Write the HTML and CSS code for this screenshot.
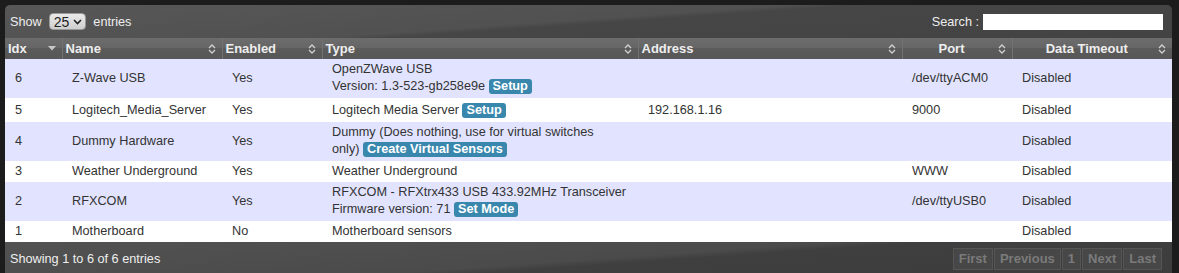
FILE: index.html
```html
<!DOCTYPE html>
<html lang="en">
<head>
  <meta charset="UTF-8">
  <title>Hardware</title>
  <link rel="stylesheet" href="styles.css">
</head>
<body>
  <div class="wrapper">
    <div class="toolbar">
      <div class="length">
        Show
        <span class="select">25
          <svg width="9" height="6" viewBox="0 0 9 6"><path d="M1 1 L4.5 4.5 L8 1" fill="none" stroke="#222" stroke-width="1.6"/></svg>
        </span>
        entries
      </div>
      <div class="filter">Search : <span class="search-box"></span></div>
    </div>

    <table class="grid">
      <colgroup>
        <col style="width:57px"><col style="width:160px"><col style="width:100px"><col style="width:316px">
        <col style="width:264px"><col style="width:110px"><col style="width:160px">
      </colgroup>
      <thead>
        <tr>
          <th><div class="th-in"><span>Idx</span><svg class="sort" width="8" height="5" viewBox="0 0 8 5"><path d="M0 0 H8 L4 4.5 Z" fill="#c8c8c8"/></svg></div></th>
          <th><div class="th-in"><span>Name</span><svg class="sort" width="8" height="10" viewBox="0 0 8 10"><path d="M1 4 L4 1 L7 4 M1 6 L4 9 L7 6" fill="none" stroke="#d0d0d0" stroke-width="1.3"/></svg></div></th>
          <th><div class="th-in"><span>Enabled</span><svg class="sort" width="8" height="10" viewBox="0 0 8 10"><path d="M1 4 L4 1 L7 4 M1 6 L4 9 L7 6" fill="none" stroke="#d0d0d0" stroke-width="1.3"/></svg></div></th>
          <th><div class="th-in"><span>Type</span><svg class="sort" width="8" height="10" viewBox="0 0 8 10"><path d="M1 4 L4 1 L7 4 M1 6 L4 9 L7 6" fill="none" stroke="#d0d0d0" stroke-width="1.3"/></svg></div></th>
          <th><div class="th-in"><span>Address</span><svg class="sort" width="8" height="10" viewBox="0 0 8 10"><path d="M1 4 L4 1 L7 4 M1 6 L4 9 L7 6" fill="none" stroke="#d0d0d0" stroke-width="1.3"/></svg></div></th>
          <th><div class="th-in center"><span>Port</span><svg class="sort" width="8" height="10" viewBox="0 0 8 10"><path d="M1 4 L4 1 L7 4 M1 6 L4 9 L7 6" fill="none" stroke="#d0d0d0" stroke-width="1.3"/></svg></div></th>
          <th><div class="th-in center"><span>Data Timeout</span><svg class="sort" width="8" height="10" viewBox="0 0 8 10"><path d="M1 4 L4 1 L7 4 M1 6 L4 9 L7 6" fill="none" stroke="#d0d0d0" stroke-width="1.3"/></svg></div></th>
        </tr>
      </thead>
      <tbody>
        <tr class="odd">
          <td>6</td><td>Z-Wave USB</td><td>Yes</td>
          <td>OpenZWave USB<br>Version: 1.3-523-gb258e9e <span class="btn">Setup</span></td>
          <td></td><td>/dev/ttyACM0</td><td>Disabled</td>
        </tr>
        <tr class="even">
          <td>5</td><td>Logitech_Media_Server</td><td>Yes</td>
          <td>Logitech Media Server <span class="btn">Setup</span></td>
          <td>192.168.1.16</td><td>9000</td><td>Disabled</td>
        </tr>
        <tr class="odd">
          <td>4</td><td>Dummy Hardware</td><td>Yes</td>
          <td>Dummy (Does nothing, use for virtual switches<br>only) <span class="btn">Create Virtual Sensors</span></td>
          <td></td><td></td><td>Disabled</td>
        </tr>
        <tr class="even">
          <td>3</td><td>Weather Underground</td><td>Yes</td>
          <td>Weather Underground</td>
          <td></td><td>WWW</td><td>Disabled</td>
        </tr>
        <tr class="odd">
          <td>2</td><td>RFXCOM</td><td>Yes</td>
          <td>RFXCOM - RFXtrx433 USB 433.92MHz Transceiver<br>Firmware version: 71 <span class="btn">Set Mode</span></td>
          <td></td><td>/dev/ttyUSB0</td><td>Disabled</td>
        </tr>
        <tr class="even">
          <td>1</td><td>Motherboard</td><td>No</td>
          <td>Motherboard sensors</td>
          <td></td><td></td><td>Disabled</td>
        </tr>
      </tbody>
    </table>

    <div class="footer">
      <div class="info">Showing 1 to 6 of 6 entries</div>
      <div class="paging">
        <span class="pg">First</span>
        <span class="pg">Previous</span>
        <span class="pg">1</span>
        <span class="pg">Next</span>
        <span class="pg">Last</span>
      </div>
    </div>
  </div>
</body>
</html>
```

FILE: styles.css
```css
body {
  margin: 0;
  padding: 5px 7px 0 5px;
  background: #1c1c1c;
  font-family: "Liberation Sans", Arial, sans-serif;
  font-size: 12.7px;
  height: 273px;
  box-sizing: border-box;
  overflow: hidden;
}
.wrapper {
  border-radius: 5px 5px 0 0;
  overflow: hidden;
}
.toolbar {
  height: 33px;
  padding: 0 9px 0 5px;
  display: flex;
  align-items: center;
  justify-content: space-between;
  color: #eee;
  background: linear-gradient(176deg, #575757 0%, #515151 48%, #464646 52%, #434343 100%);
}
.length {
  display: flex;
  align-items: center;
  gap: 7px;
}
.select {
  display: inline-flex;
  align-items: center;
  gap: 4px;
  height: 17px;
  padding: 0 3px 0 4px;
  border-radius: 4px;
  background: linear-gradient(#eaeaea, #cfcfcf);
  border: 1px solid #999;
  color: #222;
  font-size: 14px;
  box-sizing: border-box;
}
.filter {
  display: flex;
  align-items: center;
  gap: 4px;
}
.search-box {
  display: inline-block;
  width: 180px;
  height: 16px;
  background: #fff;
}
.grid {
  width: 100%;
  border-collapse: collapse;
  table-layout: fixed;
}
.grid th {
  height: 21px;
  padding: 0 6px 0 3px;
  color: #eee;
  font-size: 13px;
  font-weight: bold;
  text-align: left;
  border-left: 1px solid #727272;
  background: linear-gradient(#6c6c6c 0%, #666 45%, #5b5b5b 50%, #575757 100%);
}
.grid th:first-child {
  border-left: none;
}
.th-in {
  display: flex;
  align-items: center;
  justify-content: space-between;
}
.th-in.center span {
  flex: 1;
  text-align: center;
}
.grid td {
  padding: 3px 10px;
  line-height: 15px;
  color: #333;
  vertical-align: middle;
  white-space: nowrap;
}
.grid tr.odd td {
  background: #e2e4ff;
}
.grid tr.even td {
  background: #fff;
}
.btn {
  display: inline-block;
  margin: 2px 0 1px 0;
  padding: 1px 4px;
  line-height: 13px;
  border-radius: 3px;
  background: #3a87ad;
  color: #fff;
  font-weight: bold;
  font-size: 12.7px;
}
.footer {
  height: 40px;
  padding: 6px 10px 0 5px;
  display: flex;
  justify-content: space-between;
  align-items: flex-start;
  color: #eee;
  background: linear-gradient(176deg, #525252 0%, #4b4b4b 48%, #3f3f3f 53%, #3c3c3c 100%);
  box-sizing: border-box;
}
.info {
  padding-top: 4px;
}
.paging {
  display: flex;
  gap: 1px;
}
.pg {
  padding: 1px 5px;
  line-height: 18px;
  border: 1px solid #555;
  background: #474747;
  color: #7a7a7a;
  font-weight: bold;
  font-size: 13px;
}
```
